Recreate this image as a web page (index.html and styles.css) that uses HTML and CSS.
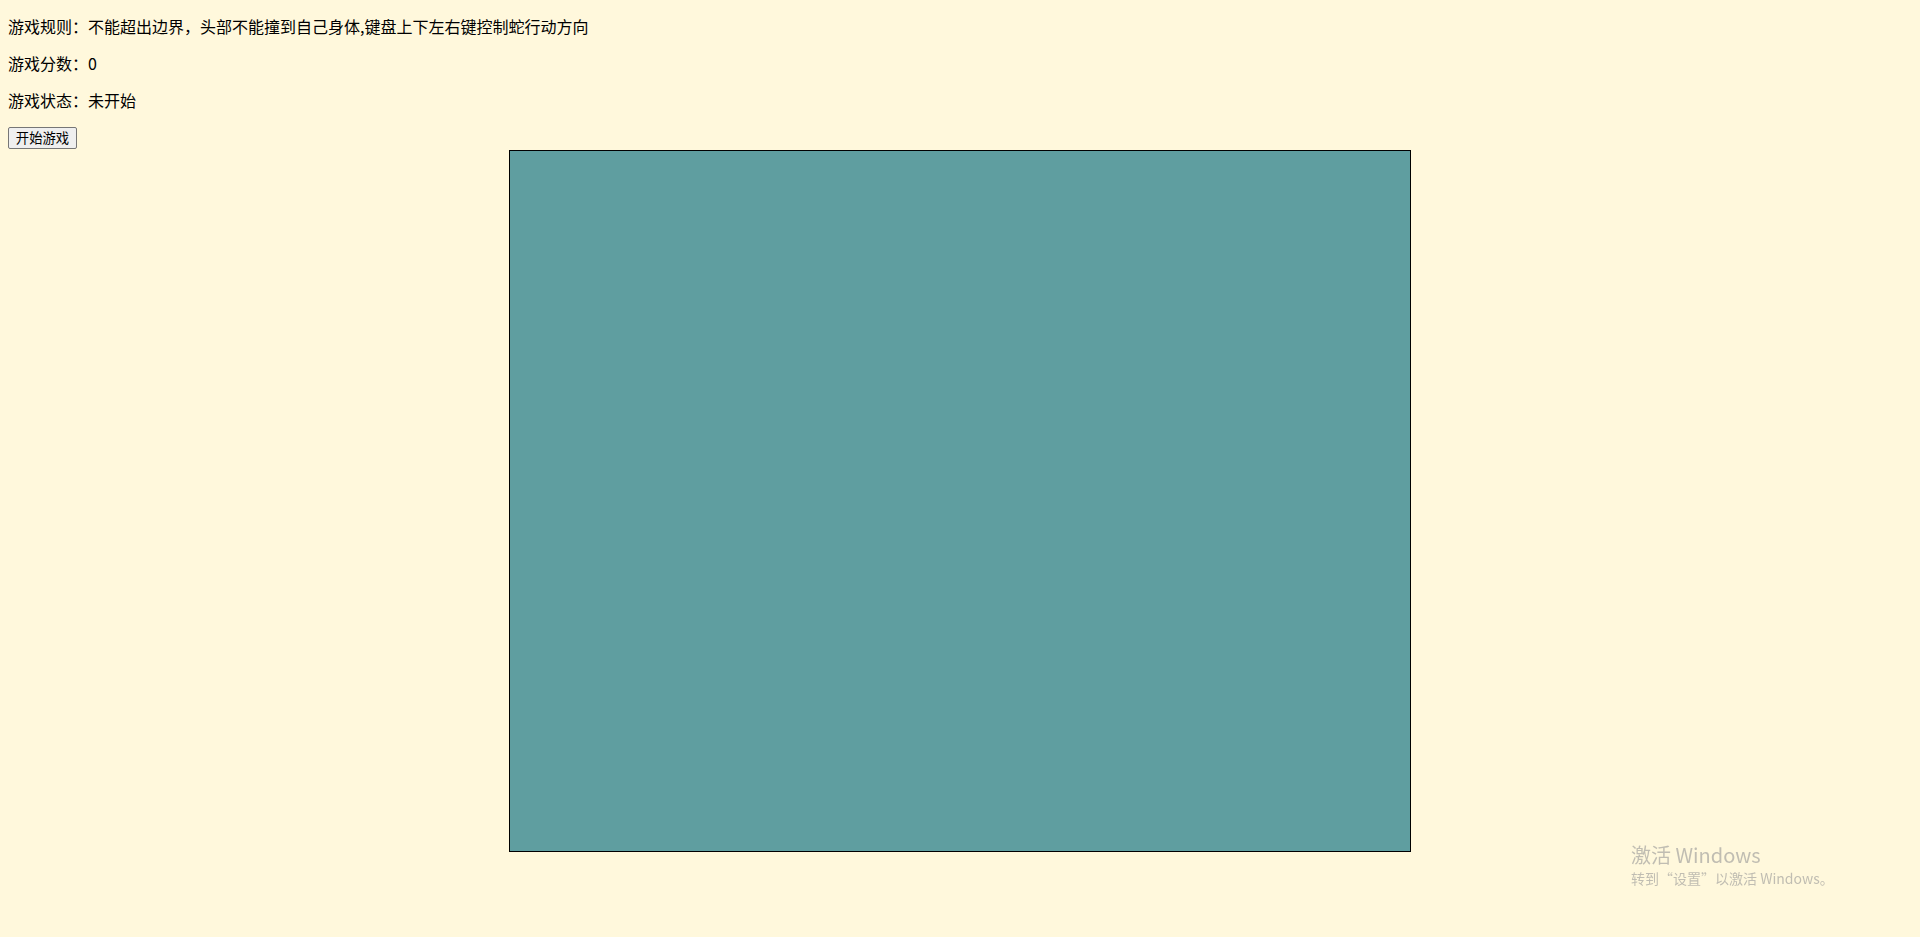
FILE: index.html
```html
<!DOCTYPE html>
<html lang="zh-CN">
<head>
<meta charset="utf-8">
<title>贪吃蛇</title>
<link rel="stylesheet" href="styles.css">
</head>
<body>
<div class="page">
<p class="line">游戏规则：不能超出边界，头部不能撞到自己身体,键盘上下左右键控制蛇行动方向</p>
<p class="line">游戏分数：<span class="score">0</span></p>
<p class="line">游戏状态：<span class="status">未开始</span></p>
<div class="controls"><button class="start-btn">开始游戏</button></div>
<div class="board"></div>
</div>
<div class="watermark">
  <div class="wm-title">激活 Windows</div>
  <div class="wm-sub">转到“设置”以激活 Windows。</div>
</div>
</body>
</html>
```

FILE: styles.css
```css
html, body {
  background: #fff8dc;
}
body {
  margin: 0;
  font-family: "Noto Sans CJK SC", "Noto Sans", sans-serif;
  font-size: 16px;
  color: #000;
}
.page {
  padding: 16px 8px 0;
}
.line {
  margin: 0 0 16px;
  line-height: 21px;
}
.controls {
  height: 23px;
}
.start-btn {
  display: block;
  width: 69px;
  height: 22px;
  padding: 0;
  font-family: "Noto Sans CJK SC", sans-serif;
  font-size: 13.33px;
  line-height: 18px;
  color: #000;
  background: #efefef;
  border: 1px solid #767676;
  border-radius: 2px;
}
.board {
  width: 900px;
  height: 700px;
  margin: 0 auto;
  background: #5f9ea0;
  border: 1px solid #000;
}
.watermark {
  position: fixed;
  left: 1631px;
  top: 842px;
  color: rgba(150, 150, 150, 0.6);
  font-family: "Noto Sans CJK SC", "Noto Sans", sans-serif;
  pointer-events: none;
}
.wm-title {
  font-size: 20px;
  line-height: 26px;
}
.wm-sub {
  font-size: 14px;
  line-height: 20px;
}
```
